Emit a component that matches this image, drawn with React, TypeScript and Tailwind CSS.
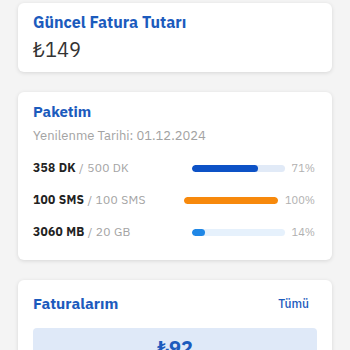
import React from "react";

const rows = [
  { used: "358 DK", total: "500 DK", pct: 71, color: "bg-[#0d52c6]", track: "bg-[#e1eaf7]", pctText: "71%", barW: "w-[93px]" },
  { used: "100 SMS", total: "100 SMS", pct: 100, color: "bg-[#f7890c]", track: "bg-[#fdebd3]", pctText: "100%", barW: "w-[94px]" },
  { used: "3060 MB", total: "20 GB", pct: 14, color: "bg-[#1f87e6]", track: "bg-[#e6f1fc]", pctText: "14%", barW: "w-[93px]" },
];

export default function App() {
  return (
    <div
      className="w-[350px] h-[350px] overflow-hidden bg-[#f4f4f4] px-[18px] pt-[3px] flex flex-col gap-[20px]"
      style={{ fontFamily: '"IBM Plex Sans", "Noto Sans", sans-serif' }}
    >
      <div className="bg-white rounded-[6px] shadow-[0_1px_4px_rgba(0,0,0,0.12)] h-[69px] shrink-0 px-[15px] pt-[8px] flex flex-col">
        <div className="text-[16px] leading-[22px] font-bold text-[#1c5bbd]">Güncel Fatura Tutarı</div>
        <div className="text-[20px] leading-[28px] text-[#333] mt-[3px]">₺149</div>
      </div>

      <div className="bg-white rounded-[6px] shadow-[0_1px_4px_rgba(0,0,0,0.12)] h-[168px] px-[15px] pt-[9px] flex flex-col shrink-0">
        <div className="text-[15px] leading-[22px] font-bold text-[#1c5bbd]">Paketim</div>
        <div className="text-[13px] leading-[20px] text-[#a3a3a3] mt-[3px]">Yenilenme Tarihi: 01.12.2024</div>
        <div className="flex flex-col gap-[12px] mt-[12px] pr-[2px]">
          {rows.map((r) => (
            <div key={r.used} className="flex items-center justify-between h-[20px]">
              <div className="text-[12px] tracking-[0.3px]">
                <span className="font-bold text-[#222]">{r.used}</span>
                <span className="text-[#a3a3a3]"> / {r.total}</span>
              </div>
              <div className="flex items-center gap-[7px]">
                <div className={`${r.barW} h-[7px] rounded-full ${r.track} overflow-hidden`}>
                  <div className={`h-full rounded-full ${r.color}`} style={{ width: `${r.pct}%` }} />
                </div>
                <div className="text-[11px] text-[#b0b0b0] text-right">{r.pctText}</div>
              </div>
            </div>
          ))}
        </div>
      </div>

      <div className="bg-white rounded-[6px] shadow-[0_1px_4px_rgba(0,0,0,0.12)] px-[15px] pt-[12px] pb-[20px] flex flex-col shrink-0">
        <div className="flex items-center justify-between h-[24px]">
          <div className="text-[15.5px] font-bold text-[#1c5bbd]">Faturalarım</div>
          <div className="text-[12px] font-medium text-[#1c5bbd] pr-[8px]">Tümü</div>
        </div>
        <div className="mt-[12px] bg-[#dfe9f8] rounded-[4px] h-[60px] flex justify-center pt-[6px]">
          <div className="text-[20px] font-bold text-[#1c5bbd] leading-[28px]">₺92</div>
        </div>
      </div>
    </div>
  );
}
